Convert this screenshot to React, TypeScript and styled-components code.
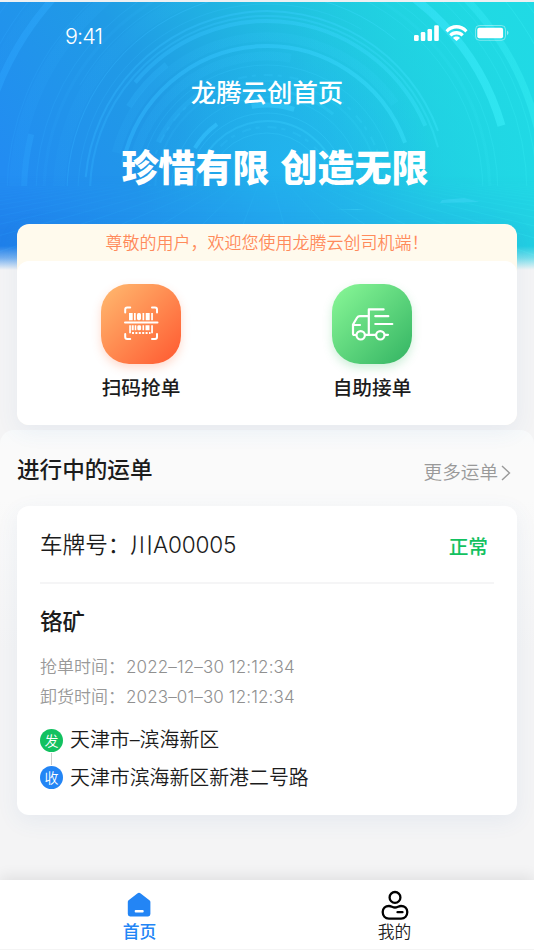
import React from 'react';
import styled, { createGlobalStyle } from 'styled-components';

const GlobalStyle = createGlobalStyle`
  *, *::before, *::after { box-sizing: border-box; }
  body { margin: 0; background: #f4f4f5; }
  svg { display: block; }
`;

const Screen = styled.div`
  width: 534px;
  height: 950px;
  display: flex;
  flex-direction: column;
  overflow: hidden;
  background: #f4f4f5;
  color: #1c1c1c;
  font-family: Inter, 'Noto Sans CJK SC', sans-serif;
`;

const Header = styled.header`
  position: relative;
  flex: none;
  height: 270px;
  border-top: 2px solid #eef0f2;
  text-align: center;
  color: #fff;
`;

const Backdrop = styled.svg`
  position: absolute;
  inset: 0;
`;

const HeaderContent = styled.div`
  position: relative;
`;

const StatusBar = styled.div`
  display: flex;
  justify-content: space-between;
  height: 60px;
  padding: 19px 25px 0 65px;
`;

const Clock = styled.span`
  font-size: 21.5px;
  font-weight: 300;
  line-height: 30px;
  letter-spacing: -0.9px;
`;

const AppTitle = styled.h1`
  margin: 13px 0 0;
  font-size: 25.4px;
  font-weight: 500;
  line-height: 36px;
`;

const Slogan = styled.p`
  display: flex;
  justify-content: center;
  gap: 11px;
  margin: 34px 0 0 16px;
  font-size: 37px;
  font-weight: 900;
  line-height: 48px;
`;

const Card = styled.section`
  width: 500px;
  margin: 0 auto;
  border-radius: 12px;
  background: #fff;
  box-shadow: 0 6px 22px rgba(60, 120, 180, 0.08);
`;

const ActionCard = styled(Card)`
  position: relative;
  flex: none;
  height: 201px;
  margin-top: -46px;
  background: #fffaed;
`;

const Notice = styled.div`
  height: 37px;
  font-size: 17px;
  font-weight: 350;
  line-height: 39px;
  text-align: center;
  color: #ff8a5b;
`;

const Actions = styled.div`
  display: grid;
  grid-template-columns: 80px 80px;
  justify-content: center;
  column-gap: 151px;
  height: 164px;
  padding: 23px 21px 0 0;
  border-radius: 12px;
  background: #fff;
`;

const Action = styled.div`
  display: flex;
  flex-direction: column;
  align-items: center;
  gap: 10px;
  font-size: 19.7px;
  font-weight: 500;
  line-height: 28px;
  white-space: nowrap;
`;

const ActionIcon = styled.div<{ $tone: 'orange' | 'green' }>`
  width: 80px;
  height: 80px;
  border-radius: 28px;
  background: ${p => p.$tone === 'orange'
    ? 'linear-gradient(135deg, #ffb36b 8%, #ff6035 92%)'
    : 'linear-gradient(135deg, #86f595 5%, #37b765 95%)'};
  box-shadow: 0 4px 10px ${p => (p.$tone === 'orange' ? 'rgba(255,110,60,.25)' : 'rgba(60,190,105,.25)')};
`;

const OrdersPanel = styled.main`
  flex: 1;
  margin-top: 5px;
  border-radius: 14px 14px 0 0;
  background: linear-gradient(#f8fafb 0, #fafafa 20px, #fafafa 70px, #f4f4f5 220px);
`;

const PanelHead = styled.div`
  display: flex;
  justify-content: space-between;
  height: 76px;
  padding: 24px 23px 0 17px;
`;

const PanelTitle = styled.h2`
  margin: 0;
  font-size: 22.6px;
  font-weight: 500;
  line-height: 32px;
`;

const MoreLink = styled.a`
  display: flex;
  align-items: center;
  gap: 3px;
  height: 28px;
  margin-top: 5px;
  font-size: 18.6px;
  font-weight: 350;
  line-height: 24px;
  color: #999;

  span { margin-top: -2px; }
`;

const OrderCard = styled(Card)`
  height: 309px;
  padding: 0 23px;
`;

const PlateRow = styled.div`
  display: flex;
  justify-content: space-between;
  align-items: center;
  height: 78px;
  padding-right: 6px;
  border-bottom: 2px solid #f5f5f6;
  font-size: 22.6px;
  font-weight: 350;
`;

const PlateNumber = styled.span`
  margin-top: -1px;
  letter-spacing: -0.2px;
`;

const Cjk = styled.span`
  letter-spacing: 0;
`;

const State = styled.span`
  padding-top: 3px;
  font-size: 19.7px;
  font-weight: 500;
  color: #12c160;
`;

const Cargo = styled.h3`
  margin: 22px 0 14px;
  font-size: 22.4px;
  font-weight: 500;
  line-height: 32px;
`;

const TimeRow = styled.div`
  display: flex;
  height: 30px;
  font-size: 17px;
  font-weight: 350;
  line-height: 30px;
  color: #999;
`;

const TimeValue = styled.span`
  padding-left: 1px;
  font-weight: 300;
  letter-spacing: 0.13px;
  color: #909090;
`;

const Route = styled.div`
  display: grid;
  grid-template-columns: 23px 1fr;
  column-gap: 7px;
  margin-top: 17px;
`;

const RouteTrack = styled.div`
  display: flex;
  flex-direction: column;
  align-items: center;
`;

const Stop = styled.span<{ $color: string }>`
  width: 23px;
  height: 23px;
  border-radius: 50%;
  background: ${p => p.$color};
  color: #fff;
  font-size: 14px;
  font-weight: 350;
  line-height: 23px;
  text-align: center;
`;

const Link = styled.span`
  width: 1.5px;
  height: 12px;
  margin: 1px 0;
  background: #ccc;
`;

const Places = styled.div`
  margin-top: -8px;
  font-size: 19.9px;
  font-weight: 350;
  line-height: 38px;
`;

const TabBar = styled.nav`
  position: relative;
  flex: none;
  display: grid;
  grid-template-columns: 1fr 1fr;
  height: 70px;
  padding: 0 12px;
  background: #fff;
  border-bottom: 1px solid #f4f4f4;
  box-shadow: 0 -3px 14px rgba(0, 0, 0, 0.09);
`;

const Tab = styled.div<{ $active?: boolean }>`
  display: flex;
  flex-direction: column;
  align-items: center;
  padding-top: 10px;
  font-size: 16.8px;
  font-weight: ${p => (p.$active ? 500 : 350)};
  line-height: 23px;
  color: ${p => (p.$active ? '#2385f5' : '#222')};
`;

/* radius, stroke width, opacity, start angle, sweep (degrees, clockwise from 9 o'clock) */
const arcs: number[][] = [
  [60, 1, 0.25, 0, 180], [72, 2, 0.3, 5, 165], [80, 1, 0.25, 0, 180], [85, 4, 0.5, 32, 22],
  [88, 5, 0.45, 80, 28], [96, 1, 0.2, 0, 180], [103, 3, 0.2, 75, 55], [112, 2, 0.12, 0, 180],
  [120, 5, 0.18, 25, 30], [128, 1, 0.2, 0, 180], [137, 9, 0.1, 10, 90], [147, 4, 0.42, 12, 148],
  [156, 9, 0.1, 15, 130], [163, 6, 0.22, 32, 20], [172, 4, 0.35, 40, 117], [177, 2, 0.3, 0, 165],
  [182, 2, 0.35, 5, 155], [189, 1, 0.2, 0, 120], [200, 1, 0.35, 0, 130], [208, 12, 0.07, 0, 82],
  [216, 1, 0.2, 30, 150], [223, 3, 0.1, 0, 180], [231, 1, 0.2, 0, 180], [244, 8, 0.5, 108, 56],
  [243, 6, 0.3, 1, 13], [252, 12, 0.1, 0, 90], [260, 1, 0.2, 0, 180], [270, 1, 0.2, 100, 80],
  [278, 7, 0.32, 105, 75], [289, 7, 0.4, 8, 50], [298, 10, 0.06, 0, 80], [306, 1, 0.25, 0, 180],
  [322, 1, 0.2, 0, 180],
];

const arcPath = (r: number, start: number, sweep: number) => {
  const point = (deg: number) => {
    const a = ((deg + 180) * Math.PI) / 180;
    return `${(267 + r * Math.cos(a)).toFixed(1)} ${(193 + r * Math.sin(a)).toFixed(1)}`;
  };
  return `M${point(start)} A${r} ${r} 0 0 1 ${point(start + sweep)}`;
};

const HeaderBackdrop = () => (
  <Backdrop width="534" height="268" viewBox="0 2 534 268">
    <defs>
      <linearGradient id="sky" gradientUnits="userSpaceOnUse" x1="40" y1="220" x2="460" y2="-60">
        <stop offset="0" stopColor="#228cf2" />
        <stop offset=".33" stopColor="#209be5" />
        <stop offset=".62" stopColor="#21bfe1" />
        <stop offset="1" stopColor="#20dfdc" />
      </linearGradient>
      <linearGradient id="side" x1="0" x2="1">
        <stop offset=".55" stopColor="#20d6e6" stopOpacity="0" />
        <stop offset="1" stopColor="#20d9e6" stopOpacity=".9" />
      </linearGradient>
      <linearGradient id="floor" x1="0" x2="1">
        <stop offset="0" stopColor="#1f80ea" />
        <stop offset=".5" stopColor="#23a5ee" />
        <stop offset="1" stopColor="#22cfe2" />
      </linearGradient>
      <linearGradient id="floorFade" x1="0" y1="0" x2="0" y2="1">
        <stop offset="0" stopColor="#fff" stopOpacity="0" />
        <stop offset=".6" stopColor="#fff" />
      </linearGradient>
      <radialGradient id="glow" gradientUnits="userSpaceOnUse" cx="285" cy="170" r="150">
        <stop offset="0" stopColor="#22b5f2" stopOpacity=".75" />
        <stop offset="1" stopColor="#22b5f2" stopOpacity="0" />
      </radialGradient>
      <linearGradient id="line" gradientUnits="userSpaceOnUse" x1="0" y1="0" x2="534" y2="0">
        <stop offset="0" stopColor="#2ca5ff" />
        <stop offset=".5" stopColor="#38ccff" />
        <stop offset="1" stopColor="#3bf4f8" />
      </linearGradient>
      <linearGradient id="fade" x1="0" y1="0" x2="0" y2="1">
        <stop offset="0" stopColor="#f4f6f8" stopOpacity="0" />
        <stop offset=".5" stopColor="#f4f6f8" stopOpacity=".4" />
        <stop offset="1" stopColor="#f4f4f5" />
      </linearGradient>
      <mask id="floorMask"><rect y="176" width="534" height="94" fill="url(#floorFade)" /></mask>
      <clipPath id="above"><rect width="534" height="186" /></clipPath>
    </defs>
    <rect width="534" height="270" fill="url(#sky)" />
    <rect width="534" height="270" fill="url(#side)" />
    <rect width="534" height="270" fill="url(#glow)" />
    <g clipPath="url(#above)" fill="none" stroke="url(#line)">
      {arcs.map(([r, w, o, s, sw]) => (
        <path key={r} d={arcPath(r, s, sw)} strokeWidth={w} opacity={o * 1.15} />
      ))}
      {[66, 118].map(r => (
        <path key={r} d={arcPath(r, 0, 180)} strokeWidth="2" strokeDasharray="9 5 4 8" opacity=".2" />
      ))}
    </g>
    <g mask="url(#floorMask)">
      <rect y="176" width="534" height="94" fill="url(#floor)" />
      <g stroke="url(#line)" strokeWidth="1" opacity=".2">
        {Array.from({ length: 42 }, (_, i) => {
          const x = -1380 + i * 80;
          return <path key={i} d={`M${267 + (x - 267) * 0.18} 184 L${x} 285`} />;
        })}
      </g>
    </g>
    <path d="M442 200l22-2 16 4-40 1z M334 209h32l-9 1z" fill="#48dafa" opacity=".4" />
    <rect y="246" width="534" height="24" fill="url(#fade)" />
  </Backdrop>
);

const StatusIcons = () => (
  <svg width="96" height="20" viewBox="413 21 96 20" fill="#fff">
    <rect x="414" y="35" width="4.7" height="6" rx="1.3" />
    <rect x="420.8" y="32" width="4.5" height="9" rx="1.3" />
    <rect x="427.5" y="29" width="4.5" height="12" rx="1.3" />
    <rect x="434.2" y="25.2" width="4.6" height="15.8" rx="1.3" />
    <path d="M445.5 30.200c6-6.800 16-6.800 22 0l-2.100 2.300c-5-5.200-12.800-5.200-17.800 0z" />
    <path d="M449.200 34.200c4-4.200 10.600-4.200 14.600 0l-2.200 2.300c-2.800-2.800-7.300-2.800-10.200 0z" />
    <path d="M453 37.900c2-1.900 5-1.900 7 0l-3.500 3.100z" />
    <rect x="475.5" y="25.500" width="30" height="14.8" rx="4" fill="none" stroke="#fff" strokeOpacity=".4" />
    <rect x="477.3" y="27.700" width="25.800" height="10.500" rx="2" />
    <path d="M507 30.6q3 2.200 0 4.600z" opacity=".5" />
  </svg>
);

const ScanIcon = () => (
  <svg width="80" height="80" viewBox="101 284 80 80" fill="#fff">
    <g fill="none" stroke="#fff" strokeWidth="2" strokeLinecap="round" strokeLinejoin="round">
      <path d="M125.2 312.5v-3q0-2 2-2h3M152 307.5h3q2 0 2 2v3M125.2 334v3q0 2 2 2h3M157 334v3q0 2-2 2h-3M125 322.600h32.500" />
    </g>
    <path d="M129 313h3.700v7.200H129zM134 313h1.700v7.200H134zM142.500 313h1.700v7.200h-1.700zM145.700 313h4v7.200h-4zM151.200 313h1.700v7.200h-1.700z" />
    <rect x="137" y="313" width="4" height="7.2" rx="1.6" />
    <path d="M129.200 325.300h1.700v8h-1.700zM131.700 325.300h2v5h-2zM134.700 325.300h1.600v5h-1.600zM142.500 325.300h1.600v5h-1.600zM145.500 325.300h4v5h-4zM151.200 325.300h1.700v8h-1.700z" />
    <rect x="137.3" y="325.300" width="3.800" height="5" rx="1.400" />
    <path d="M132 333h18.500" fill="none" stroke="#fff" strokeWidth="1.800" strokeDasharray="2 1.400" />
  </svg>
);

const TruckIcon = () => (
  <svg width="80" height="80" viewBox="332 284 80 80" fill="none" stroke="#fff" strokeWidth="2.200" strokeLinecap="round" strokeLinejoin="round">
    <path d="M356 335h-1.500q-1.500 0-1.500-1.500v-9l4-6.700q1-1.600 3-1.600h8.500M354 325h6M368.800 334.800V309.400h14.800M375.300 316.200h13M375.300 324h17M365.500 334.800h10M385 334.800h3" />
    <circle cx="360.700" cy="335.300" r="4.200" />
    <circle cx="380.300" cy="335.300" r="4.200" />
  </svg>
);

const Chevron = () => (
  <svg width="10" height="16" viewBox="0 0 10 16" fill="none" stroke="#999" strokeWidth="1.400">
    <path d="M1 1l7.500 7L1 15" />
  </svg>
);

const HomeIcon = () => (
  <svg width="28" height="31" viewBox="126.500 890 28 31">
    <path d="M128.300 902q0-1 .8-1.700l8.700-6.800q1.700-1.300 3.400 0l8.700 6.800q1 .8 1 1.800v12q0 2.300-2.300 2.300h-18q-2.300 0-2.300-2.300z" fill="#2385f5" />
    <rect x="135.200" y="910" width="9" height="2.600" rx="1" fill="#fff" />
  </svg>
);

const ProfileIcon = () => (
  <svg width="28" height="31" viewBox="381 890 28 31" fill="none" stroke="#000" strokeWidth="2.300">
    <circle cx="395" cy="897.400" r="5.400" />
    <path d="M389 906c2.300 0 3.600 1.500 6 1.500s3.700-1.500 6-1.500c3.700 0 6.300 2.400 6.300 6.100s-2.500 6.500-6.200 6.500h-12.200c-3.700 0-6.200-2.800-6.200-6.500s2.600-6.100 6.300-6.100z" />
    <path d="M397.500 912.200h5" strokeLinecap="round" />
  </svg>
);

export default function App() {
  return (
    <Screen>
      <GlobalStyle />
      <Header>
        <HeaderBackdrop />
        <HeaderContent>
          <StatusBar>
            <Clock>9:41</Clock>
            <StatusIcons />
          </StatusBar>
          <AppTitle>龙腾云创首页</AppTitle>
          <Slogan><span>珍惜有限</span><span>创造无限</span></Slogan>
        </HeaderContent>
      </Header>
      <ActionCard>
        <Notice>尊敬的用户，欢迎您使用龙腾云创司机端！</Notice>
        <Actions>
          <Action>
            <ActionIcon $tone="orange"><ScanIcon /></ActionIcon>
            扫码抢单
          </Action>
          <Action>
            <ActionIcon $tone="green"><TruckIcon /></ActionIcon>
            自助接单
          </Action>
        </Actions>
      </ActionCard>
      <OrdersPanel>
        <PanelHead>
          <PanelTitle>进行中的运单</PanelTitle>
          <MoreLink><span>更多运单</span><Chevron /></MoreLink>
        </PanelHead>
        <OrderCard>
          <PlateRow>
            <PlateNumber><Cjk>车牌号：川</Cjk>A00005</PlateNumber>
            <State>正常</State>
          </PlateRow>
          <Cargo>铬矿</Cargo>
          <TimeRow><span>抢单时间：</span><TimeValue>2022–12–30 12:12:34</TimeValue></TimeRow>
          <TimeRow><span>卸货时间：</span><TimeValue>2023–01–30 12:12:34</TimeValue></TimeRow>
          <Route>
            <RouteTrack>
              <Stop $color="#12c160">发</Stop>
              <Link />
              <Stop $color="#2385f5">收</Stop>
            </RouteTrack>
            <Places>
              <div>天津市–滨海新区</div>
              <div>天津市滨海新区新港二号路</div>
            </Places>
          </Route>
        </OrderCard>
      </OrdersPanel>
      <TabBar>
        <Tab $active><HomeIcon />首页</Tab>
        <Tab><ProfileIcon />我的</Tab>
      </TabBar>
    </Screen>
  );
}
